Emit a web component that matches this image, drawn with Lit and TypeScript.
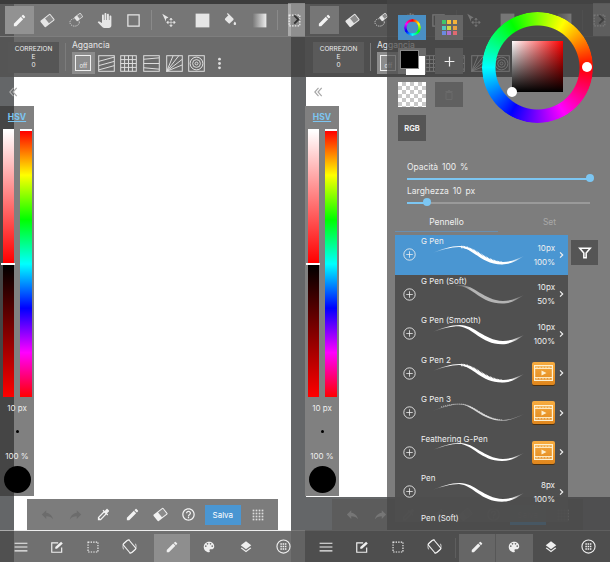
import { LitElement, html, css, svg } from "lit";
import { customElement } from "lit/decorators.js";

const P = {
  pencil: "M3 17.25V21h3.75L17.81 9.94l-3.75-3.75L3 17.25zM20.71 7.04a1 1 0 0 0 0-1.41l-2.34-2.34a1 1 0 0 0-1.41 0l-1.83 1.83 3.75 3.75 1.83-1.83z",
  hand: "M23 5.5V20c0 2.2-1.8 4-4 4h-7.3c-1.08 0-2.1-.43-2.85-1.19L1 14.83s1.26-1.23 1.3-1.25c.22-.19.49-.29.79-.29.22 0 .42.06.6.16.04.01 4.31 2.46 4.31 2.46V4c0-.83.67-1.5 1.5-1.5S11 3.17 11 4v7h1V1.5c0-.83.67-1.5 1.5-1.5S15 .67 15 1.5V11h1V2.5c0-.83.67-1.5 1.5-1.5s1.5.67 1.5 1.5V11h1V5.5c0-.83.67-1.5 1.5-1.5s1.5.67 1.5 1.5z",
  bucket: "M16.56 8.94L7.62 0 6.21 1.41l2.38 2.38-5.15 5.15c-.59.59-.59 1.54 0 2.12l5.5 5.5c.29.29.68.44 1.06.44s.77-.15 1.06-.44l5.5-5.5c.59-.58.59-1.53 0-2.12zM19 13.5s-2 2.17-2 3.5c0 1.1.9 2 2 2s2-.9 2-2c0-1.33-2-3.5-2-3.5z",
  dropper: "M20.71 5.63l-2.34-2.34c-.39-.39-1.02-.39-1.41 0l-3.12 3.12-1.93-1.91-1.41 1.41 1.42 1.42L3 16.25V21h4.75l8.92-8.92 1.42 1.42 1.41-1.41-1.92-1.92 3.12-3.12c.4-.4.4-1.03.01-1.42zM6.92 19L5 17.08l8.06-8.06 1.92 1.92L6.92 19z",
  help: "M11 18h2v-2h-2v2zm1-16C6.48 2 2 6.48 2 12s4.48 10 10 10 10-4.48 10-10S17.52 2 12 2zm0 18c-4.41 0-8-3.59-8-8s3.59-8 8-8 8 3.59 8 8-3.59 8-8 8zm0-14c-2.21 0-4 1.79-4 4h2c0-1.1.9-2 2-2s2 .9 2 2c0 2-3 1.75-3 5h2c0-2.25 3-2.5 3-5 0-2.21-1.79-4-4-4z",
  undo: "M10 9V5l-7 7 7 7v-4.1c5 0 8.5 1.6 11 5.1-1-5-4-10-11-11z",
  redo: "M14 9V5l7 7-7 7v-4.1c-5 0-8.5 1.6-11 5.1 1-5 4-10 11-11z",
  palette: "M12 3c-4.97 0-9 4.03-9 9s4.03 9 9 9c.83 0 1.5-.67 1.5-1.5 0-.39-.15-.74-.39-1.01-.23-.26-.38-.61-.38-.99 0-.83.67-1.5 1.5-1.5H16c2.76 0 5-2.24 5-5 0-4.42-4.03-8-9-8zm-5.5 9c-.83 0-1.5-.67-1.5-1.5S5.67 9 6.5 9 8 9.67 8 10.5 7.33 12 6.5 12zm3-4C8.67 8 8 7.33 8 6.5S8.67 5 9.5 5s1.5.67 1.5 1.5S10.33 8 9.5 8zm5 0c-.83 0-1.5-.67-1.5-1.5S13.67 5 14.5 5s1.5.67 1.5 1.5S15.33 8 14.5 8zm3 4c-.83 0-1.5-.67-1.5-1.5S16.67 9 17.5 9s1.5.67 1.5 1.5-.67 1.5-1.5 1.5z",
  layers: "M11.99 18.54l-7.37-5.73L3 14.07l9 7 9-7-1.63-1.27-7.38 5.74zM12 16l7.36-5.73L21 9l-9-7-9 7 1.63 1.27L12 16z",
};

const f = (d: string) => svg`<path d=${d} fill="currentColor"/>`;
const eraserShape = svg`<g transform="rotate(-38 12 12)"><rect x="2" y="5.5" width="20" height="13" rx="1.5" fill="currentColor"/><rect x="11" y="7" width="9.5" height="10" fill="#8b8b8b"/></g>`;

const icons: Record<string, unknown> = {
  pencil: f(P.pencil),
  eraser: eraserShape,
  lasso: svg`<ellipse cx="9" cy="15" rx="7.5" ry="6" fill="none" stroke="currentColor" stroke-width="1.3" stroke-dasharray="2 1.6"/><g transform="translate(8 -1) scale(.62)">${eraserShape}</g>`,
  hand: f(P.hand),
  square: svg`<rect x="3" y="3" width="18" height="18" fill="none" stroke="currentColor" stroke-width="2"/>`,
  move: svg`<path d="M2 1l10 6-4 2 0 5z" fill="currentColor"/><path d="M16 9v12M10 15h12M16 8l-2 2.5h4zM16 22l-2-2.5h4zM9 15l2.5-2v4zM23 15l-2.5-2v4z" fill="currentColor" stroke="currentColor" stroke-width="1"/>`,
  fill: svg`<rect x="1" y="1" width="22" height="22" fill="currentColor"/>`,
  bucket: f(P.bucket),
  gradient: svg`<defs><linearGradient id="gr"><stop offset="0" stop-color="#777"/><stop offset="1" stop-color="#eee"/></linearGradient></defs><rect x="1" y="1" width="22" height="22" fill="url(#gr)"/>`,
  dotted: svg`<rect x="3.5" y="3.5" width="17" height="17" fill="none" stroke="currentColor" stroke-width="2" stroke-dasharray="2.4 2"/>`,
  undo: f(P.undo),
  redo: f(P.redo),
  dropper: f(P.dropper),
  help: f(P.help),
  menu: svg`<path d="M1 5.5h22M1 12h22M1 18.5h22" stroke="currentColor" stroke-width="2"/>`,
  edit: svg`<path d="M20 13v8H3V5h11" fill="none" stroke="currentColor" stroke-width="2"/><path d="M9 15v-3l10-9 3 3-10 9z" fill="currentColor"/>`,
  rotate: svg`<circle cx="12" cy="12" r="10.5" fill="none" stroke="currentColor" stroke-width="1.3" stroke-dasharray="22 11" stroke-dashoffset="5"/><rect x="6" y="2.5" width="12" height="19" rx="1.5" transform="rotate(-40 12 12)" fill="none" stroke="currentColor" stroke-width="1.8"/>`,
  palette: f(P.palette),
  layers: f(P.layers),
  globe: svg`<circle cx="12" cy="12" r="10.5" fill="none" stroke="currentColor" stroke-width="1.8"/><path d="M7 8h10M7 12h10M7 16h10" stroke="currentColor" stroke-width="2.4" stroke-dasharray="2.4 1.2"/>`,
  filter: svg`<path d="M3 4h18l-7 8v8h-4v-8z" fill="none" stroke="currentColor" stroke-width="2.6"/>`,
  plusc: svg`<circle cx="12" cy="12" r="10.5" fill="none" stroke="currentColor" stroke-width="1.6"/><path d="M12 6v12M6 12h12" stroke="currentColor" stroke-width="1.4"/>`,
  plus: svg`<path d="M12 3v18M3 12h18" stroke="currentColor" stroke-width="2.2"/>`,
  trash: svg`<path d="M6 7h12v14H6zM5 5h14M10 3h4" fill="none" stroke="currentColor" stroke-width="2"/>`,
  chev: svg`<path d="M7 3l9 9-9 9" fill="none" stroke="currentColor" stroke-width="4.2"/>`,
  dchev: svg`<path d="M12 3l-8 9 8 9M19 3l-8 9 8 9" fill="none" stroke="currentColor" stroke-width="2.6"/>`,
  dots: svg`<g fill="currentColor">${[3, 9, 15, 21].map((y) => [3, 9, 15, 21].map((x) => svg`<rect x=${x - 1.7} y=${y - 1.7} width="3.4" height="3.4"/>`))}</g>`,
  vdots: svg`<g fill="currentColor"><circle cx="12" cy="4" r="2.6"/><circle cx="12" cy="12" r="2.6"/><circle cx="12" cy="20" r="2.6"/></g>`,
  s1: svg`<g fill="none" stroke="currentColor" stroke-width="1.4"><rect x="1" y="1" width="22" height="22"/><path d="M1 9l22-6M1 15l22-6M1 21l22-6"/></g>`,
  s2: svg`<g fill="none" stroke="currentColor" stroke-width="1.4"><rect x="1" y="1" width="22" height="22"/><path d="M6.5 1v22M12 1v22M17.5 1v22M1 6.5h22M1 12h22M1 17.5h22"/></g>`,
  s3: svg`<g fill="none" stroke="currentColor" stroke-width="1.4"><rect x="1" y="1" width="22" height="22"/><path d="M1 6l22-2M1 12h22M1 18l22 2"/></g>`,
  s4: svg`<g fill="none" stroke="currentColor" stroke-width="1.4"><rect x="1" y="1" width="22" height="22"/><path d="M1 23L10 1M1 23L18 1M1 23L23 6M1 23L23 14"/></g>`,
  s5: svg`<g fill="none" stroke="currentColor" stroke-width="1.4"><rect x="1" y="1" width="22" height="22"/><circle cx="12" cy="12" r="9"/><circle cx="12" cy="12" r="5.5"/><circle cx="12" cy="12" r="2"/></g>`,
};

const ic = (name: string, cls = "") =>
  html`<svg class="ic ${cls}" viewBox="0 0 24 24">${icons[name]}</svg>`;

const strokePath = (t: number) =>
  `M3 13C14 8 24 5 33 5C48 5 56 20 76 21C84 21 90 18 97 15C90 ${18 + t * 0.6} 84 ${21 + t} 75 ${21 + t}C54 ${21 + t} 46 ${5 + t * 0.8} 32 ${5 + t * 0.4}C24 ${5 + t * 0.4} 14 9 3 13Z`;

interface Brush {
  name: string;
  t: number;
  size?: string;
  op?: string;
  video?: boolean;
  kind?: string;
  active?: boolean;
  cut?: boolean;
}

const brushes: Brush[] = [
  { name: "G Pen", t: 2.4, size: "10px", op: "100%", kind: "rough", active: true },
  { name: "G Pen (Soft)", t: 2.6, size: "10px", op: "50%", kind: "soft" },
  { name: "G Pen (Smooth)", t: 3.2, size: "10px", op: "100%" },
  { name: "G Pen 2", t: 2.6, video: true, kind: "rough" },
  { name: "G Pen 3", t: 0.6, video: true, kind: "thin" },
  { name: "Feathering G-Pen", t: 2, video: true },
  { name: "Pen", t: 2.8, size: "8px", op: "100%" },
  { name: "Pen (Soft)", t: 2.8, cut: true },
];

@customElement("app-root")
export class AppRoot extends LitElement {
  static styles = css`
    :host { display: block; width: 610px; height: 562px; overflow: hidden; font-family: "Inter", "Open Sans", sans-serif; color: #eee; }
    * { box-sizing: border-box; }
    .stage { display: flex; width: 610px; height: 562px; }
    .phone { position: relative; width: 305px; height: 562px; flex: none; display: flex; flex-direction: column; background: #646668; overflow: hidden; }
    .paper { position: absolute; background: #fff; }
    .one .paper { left: 14px; right: 14px; top: 0; bottom: 31px; }
    .two .paper { left: 1px; right: 0; top: 0; bottom: 65px; }
    .ic { display: block; width: 100%; height: 100%; fill: none; color: inherit; }

    .strip, .tools, .opts, .nav, .hsv, .float { position: relative; flex: none; }
    .strip { height: 4px; }
    .one .strip { background: #3c3c3c; }
    .two .strip { background: #3e3e3e; }
    .tools { height: 33px; display: flex; align-items: center; padding-left: 5px; color: #e6e6e6; border-bottom: 1px solid #7e7e7e; }
    .one .tools { background: linear-gradient(90deg, #585858 14px, #767676 14px, #767676 291px, #4a4a4a 291px); }
    .two .tools { background: #565656; border-bottom-color: #626262; }
    .cell { width: 28.5px; height: 28px; display: flex; align-items: center; justify-content: center; flex: none; }
    .cell > svg { width: 15px; height: 15px; }
    .cell.on { background: #929292; color: #f4f4f4; }
    .two .cell.on { background: #767676; }
    .sep { width: 1px; height: 20px; background: #8a8a8a; margin: 0 3px; flex: none; }
    .two .sep { background: #666; }
    .gap { width: 5px; flex: none; }
    .more { position: absolute; left: 288px; right: 0; top: -1px; height: 33px; background: rgba(255,255,255,.38); display: flex; align-items: center; justify-content: center; color: #333; }
    .more svg { width: 11px; height: 11px; }

    .opts { height: 40px; display: flex; align-items: center; padding-left: 8px; }
    .one .opts { background: linear-gradient(90deg, #555 14px, #6b6b6b 14px, #6b6b6b 291px, #484848 291px); }
    .two .opts { background: #4e4e4e; }
    .correz { width: 51px; height: 31px; background: #565656; font-size: 6.5px; line-height: 8px; text-align: center; color: #eee; display: flex; flex-direction: column; justify-content: center; }
    .two .correz { background: #5a5a5a; }
    .opts .sep { height: 28px; margin: 0 6px 0 6px; background: #7c7c7c; }
    .snap { display: flex; flex-direction: column; }
    .snap-t { font-size: 8.5px; line-height: 11px; color: #e6e6e6; }
    .snap-r { display: flex; align-items: center; margin-top: 1px; }
    .s { width: 22.7px; height: 22px; display: flex; align-items: center; justify-content: center; color: #dedede; }
    .s svg { width: 17px; height: 17px; }
    .s.off { background: #8c8c8c; position: relative; }
    .off-b { width: 16px; height: 16px; border: 1px solid #eee; font-size: 6px; display: flex; align-items: flex-end; justify-content: center; line-height: 8px; color: #eee; }
    .s.v svg { width: 13px; height: 13px; }

    .chev-row { position: relative; height: 29px; display: flex; align-items: center; padding-left: 8px; color: #a8a8a8; flex: none; }
    .chev-row svg { width: 11px; height: 12px; }

    .hsv { width: 34px; height: 390px; display: flex; flex-direction: column; align-items: center; }
    .one .hsv { background: linear-gradient(90deg, #454545 14px, #808080 14px); }
    .two .hsv { background: #808080; margin-left: 0; }
    .hsv-t { height: 23px; padding-top: 5px; font-size: 8.5px; line-height: 12px; font-weight: 700; color: #7cc6f2; text-decoration: underline; }
    .bars { display: flex; gap: 6px; width: 34px; padding-left: 3px; height: 268px; flex: none; }
    .bar { width: 11px; height: 268px; border-top: 2px solid #fff; position: relative; }
    .hue { width: 12px; background: linear-gradient(#f00, #ff0 16.6%, #0f0 33.3%, #0ff 50%, #00f 66.6%, #f0f 83.3%, #f00); }
    .sat { background: linear-gradient(#fff, #f00 49.5%, #000 50.5%, #f00); }
    .sat::after { content: ""; position: absolute; left: -2px; right: -1px; top: 132px; height: 2px; background: #fff; }
    .px { font-size: 8px; color: #eee; margin-top: 5px; line-height: 12px; flex: none; }
    .px.low { margin-top: 0; }
    .pt { width: 3px; height: 3px; border-radius: 50%; background: #000; margin: 15.5px 0 17.5px; flex: none; }
    .blk { width: 27px; height: 27px; border-radius: 50%; background: #000; margin-top: 4px; flex: none; }

    .float { margin: 3px 0 0 27px; width: 251px; height: 31px; display: flex; align-items: center; padding-left: 6px; }
    .one .float { background: #7c7c7c; }
    .two .float { background: #5c5c5c; }
    .fi { width: 28.3px; height: 16px; display: flex; justify-content: center; color: #f2f2f2; flex: none; }
    .fi svg { width: 15px; height: 15px; }
    .fi.dim { color: #6c6c6c; }
    .two .fi.dim { color: #767676; }
    .salva { margin-left: 2px; width: 36px; height: 20px; background: #4a96d2; font-size: 8px; display: flex; align-items: center; justify-content: center; color: #fff; flex: none; }
    .two .salva { background: #4a7fa8; }
    .grid { width: 12px; height: 12px; margin-left: 11px; color: #ddd; flex: none; }
    .line { position: relative; height: 1px; flex: none; }
    .one .line { background: linear-gradient(90deg, #aaa 14px, #eee 14px, #eee 291px, #777 291px); }
    .two .line { background: #5f5f5f; }

    .nav { height: 31px; display: flex; align-items: center; padding-left: 3px; color: #efefef; }
    .one .nav { background: linear-gradient(90deg, #505050 14px, #707070 14px, #707070 291px, #636363 291px); }
    .two .nav { background: #4e4e4e; }
    .n { width: 36px; height: 28px; margin-top: 3px; display: flex; align-items: center; justify-content: center; flex: none; padding-bottom: 3px; }
    .n svg { width: 14px; height: 14px; }
    .n.lg svg { width: 15px; height: 15px; }
    .n.w { width: 37.5px; }
    .n.on { background: #8e8e8e; }
    .two .n.on { background: #666; }
    .two .n.w.on { border-left: 1px solid #575757; }
    .ngap { width: 7px; flex: none; display: flex; justify-content: center; }
    .two .ngap::after { content: ""; width: 1px; height: 20px; background: #5e5e5e; margin-top: 3px; }

    .panel { position: absolute; left: 82px; top: 0; right: 0; height: 530px; background: rgba(70,70,70,.7); display: flex; flex-direction: column; }
    .top { display: flex; height: 162px; flex: none; }
    .sw { margin: 15px 0 0 11px; display: grid; grid-template-columns: 28px 28px; grid-template-rows: 25px 26px 25px 26px; column-gap: 9px; row-gap: 8px; align-self: start; }
    .b { display: flex; align-items: center; justify-content: center; background: #666; }
    .b.wheelb { background: #4a8fc4; }
    .mini { width: 17px; height: 17px; border-radius: 50%; background: conic-gradient(#f00, #ff0, #0f0, #0ff, #00f, #f0f, #f00); -webkit-mask: radial-gradient(circle, transparent 5.6px, #000 6.2px); mask: radial-gradient(circle, transparent 5.6px, #000 6.2px); }
    .pal { display: grid; grid-template-columns: repeat(3, 4px); grid-auto-rows: 4px; gap: 1.5px; }
    .pal i { display: block; }
    .fg { position: relative; background: #6a6a6a; }
    .fg-w { position: absolute; left: 8px; top: 8px; width: 19px; height: 19px; background: #fff; }
    .fg-k { position: absolute; left: 2px; top: 2px; width: 19px; height: 19px; background: #000; border: 1px solid #888; }
    .b.plus { color: #eee; background: #5a5a5a; }
    .b.plus svg { width: 13px; height: 13px; }
    .b.trash { color: #6a6a6a; background: #606060; }
    .b.trash svg { width: 12px; height: 12px; }
    .check { background: #fff conic-gradient(#c8c8c8 25%, #fff 0 50%, #c8c8c8 0 75%, #fff 0) 0 0 / 8px 8px; }
    .b.rgb { background: #555; font-size: 7.5px; font-weight: 700; color: #f0f0f0; }
    .wheel { position: relative; width: 111px; height: 111px; margin: 12px 0 0 19px; flex: none; }
    .ring { position: absolute; inset: 0; border-radius: 50%; background: conic-gradient(from 90deg, #f00, #f0f, #00f, #0ff, #0f0, #ff0, #f00); -webkit-mask: radial-gradient(circle, transparent 41.5px, #000 42.5px); mask: radial-gradient(circle, transparent 41.5px, #000 42.5px); }
    .sv { position: absolute; left: 30px; top: 29px; width: 51px; height: 51px; background: linear-gradient(transparent, #000), linear-gradient(90deg, #fff, #f00); }
    .th { position: absolute; width: 10px; height: 10px; border-radius: 50%; background: #fff; }
    .th.a { left: 100px; top: 50px; }
    .th.b2 { left: 25px; top: 75px; }

    .sl { margin-left: 20px; width: 183px; flex: none; margin-bottom: 2px; }
    .sl-t { font-size: 8.5px; line-height: 11px; color: #eee; word-spacing: 1.5px; }
    .track { height: 11px; position: relative; display: flex; align-items: center; }
    .rail { height: 2px; width: 100%; background: #9a9a9a; }
    .rail i { display: block; height: 100%; background: #7cc6f2; }
    .knob { position: absolute; top: 1px; width: 8px; height: 8px; border-radius: 50%; background: #7cc6f2; margin-left: -4px; }

    .tabs { display: flex; margin: 6px 0 0 8px; flex: none; height: 19px; }
    .tab { width: 103px; text-align: center; font-size: 8.5px; line-height: 12px; color: #f0f0f0; }
    .tab.act { border-bottom: 1px solid #6a8fb0; height: 16px; }
    .tab.sec { color: #a8a8a8; }
    .lower { display: flex; margin: 0 0 0 8px; flex: none; }
    .list { width: 173px; height: 287px; overflow: hidden; background: rgba(78,78,78,.97); flex: none; }
    .row { height: 39.5px; display: grid; grid-template-columns: 26px 1fr auto 13px; align-items: center; color: #f0f0f0; position: relative; }
    .row.active { background: #4a96d2; }
    .plusc { width: 13px; height: 13px; margin-left: 7.5px; }
    .mid { position: relative; align-self: stretch; display: grid; }
    .name { grid-area: 1 / 1; font-size: 8px; line-height: 10px; margin-top: 1px; position: relative; z-index: 1; white-space: nowrap; }
    .st { grid-area: 1 / 1; width: 100px; height: 28px; align-self: center; margin-left: 6px; color: #fff; overflow: visible; }
    .vals { font-size: 8px; line-height: 14px; text-align: right; width: 24px; white-space: nowrap; position: relative; }
    .chv { width: 7px; height: 10px; margin-left: 3px; }
    .video { width: 23px; height: 23px; border-radius: 2px; background: linear-gradient(#f7ac40, #e0861c); box-shadow: 0 1px 0 #4a3010; display: flex; align-items: center; justify-content: center; }
    .video svg { width: 19px; height: 16px; }
    .filter { width: 27px; height: 25px; margin: 5px 0 0 3px; background: #555; color: #fff; display: flex; align-items: center; justify-content: center; }
    .filter svg { width: 14px; height: 14px; }
  `;

  private phone(which: string) {
    const two = which === "two";
    return html`<div class="phone ${which}">
      <div class="paper"></div>
      <div class="strip"></div>
      <div class="tools">
        <div class="cell on">${ic("pencil")}</div>
        <div class="cell">${ic("eraser")}</div>
        <div class="cell">${ic("lasso")}</div>
        <div class="cell">${ic("hand")}</div>
        <div class="cell">${ic("square")}</div>
        <div class="sep"></div>
        <div class="cell">${ic("move")}</div>
        <div class="gap"></div>
        <div class="cell">${ic("fill")}</div>
        <div class="cell">${ic("bucket")}</div>
        <div class="cell">${ic("gradient")}</div>
        <div class="sep"></div>
        <div class="cell">${ic("dotted")}</div>
        <div class="more">${ic("chev")}</div>
      </div>
      <div class="opts">
        <div class="correz"><div>CORREZION</div><div>E</div><div>0</div></div>
        <div class="sep"></div>
        <div class="snap">
          <div class="snap-t">Aggancia</div>
          <div class="snap-r">
            <div class="s off"><div class="off-b">off</div></div>
            ${["s1", "s2", "s3", "s4", "s5"].map((n) => html`<div class="s">${ic(n)}</div>`)}
            <div class="s v">${ic("vdots")}</div>
          </div>
        </div>
      </div>
      <div class="chev-row">${ic("dchev")}</div>
      <div class="hsv">
        <div class="hsv-t">HSV</div>
        <div class="bars"><div class="bar sat"></div><div class="bar hue"></div></div>
        <div class="px">10 px</div>
        <div class="pt"></div>
        <div class="px low">100 %</div>
        <div class="blk"></div>
      </div>
      <div class="float">
        <div class="fi dim">${ic("undo")}</div>
        <div class="fi dim">${ic("redo")}</div>
        <div class="fi">${ic("dropper")}</div>
        <div class="fi">${ic("pencil")}</div>
        <div class="fi">${ic("eraser")}</div>
        <div class="fi">${ic("help")}</div>
        <div class="salva">Salva</div>
        <div class="grid">${ic("dots")}</div>
      </div>
      <div class="line"></div>
      <div class="nav">
        <div class="n">${ic("menu")}</div>
        <div class="n">${ic("edit")}</div>
        <div class="n">${ic("dotted")}</div>
        <div class="n lg">${ic("rotate")}</div>
        <div class="ngap"></div>
        <div class="n on">${ic("pencil")}</div>
        <div class="n w ${two ? "on" : ""}">${ic("palette")}</div>
        <div class="n w">${ic("layers")}</div>
        <div class="n w lg">${ic("globe")}</div>
      </div>
      ${two ? this.panel() : ""}
    </div>`;
  }

  private stroke(b: Brush, i: number) {
    const d = strokePath(b.t);
    const id = `fade${i}`;
    const start = b.kind === "soft" ? 0.28 : 0.06;
    const color = b.kind === "soft" ? "#b4b4b4" : b.kind === "thin" ? "#d8d8d8" : "#fff";
    const defs = html`<svg class="st" viewBox="0 0 100 28">
      <defs>
        <linearGradient id=${id} gradientUnits="userSpaceOnUse" x1="0" x2="100" y1="0" y2="0">
          <stop offset=${start} stop-color=${color} stop-opacity="0"/>
          <stop offset=${start + 0.16} stop-color=${color}/>
          <stop offset=".84" stop-color=${color}/>
          <stop offset=".97" stop-color=${color} stop-opacity=".1"/>
        </linearGradient>
      </defs>
      <path d=${d} fill="url(#${id})"/>
      ${b.kind === "rough"
        ? svg`<path d="M34 6C48 6 56 20 76 22" fill="none" stroke="#fff" stroke-width="2.6" stroke-dasharray=".8 .7"/>`
        : b.kind === "thin"
          ? svg`<path d="M14 8C20 6 26 5 33 5C48 5 56 20 76 21" fill="none" stroke="#d8d8d8" stroke-width=".8" stroke-dasharray="1 1"/>`
          : ""}
    </svg>`;
    return defs;
  }

  private panel() {
    const pal = ["#3fc56b", "#f4c53a", "#f5b23a", "#4fc9c0", "#c8d84a", "#e8a040", "#6a8ae0", "#b070d0", "#e06a70"];
    return html`<div class="panel">
      <div class="top">
        <div class="sw">
          <div class="b wheelb"><div class="mini"></div></div>
          <div class="b"><div class="pal">${pal.map((c) => html`<i style="background:${c}"></i>`)}</div></div>
          <div class="fg"><div class="fg-w"></div><div class="fg-k"></div></div>
          <div class="b plus">${ic("plus")}</div>
          <div class="check"></div>
          <div class="b trash">${ic("trash")}</div>
          <div class="b rgb">RGB</div>
        </div>
        <div class="wheel">
          <div class="ring"></div>
          <div class="sv"></div>
          <div class="th a"></div>
          <div class="th b2"></div>
        </div>
      </div>
      ${this.slider("Opacità 100 %", 100)}
      ${this.slider("Larghezza 10 px", 11)}
      <div class="tabs">
        <div class="tab act">Pennello</div>
        <div class="tab sec">Set</div>
      </div>
      <div class="lower">
        <div class="list">
          ${brushes.map(
            (b, i) => html`<div class="row ${b.active ? "active" : ""}">
              <div class="plusc">${ic("plusc")}</div>
              <div class="mid"><div class="name">${b.name}</div>${this.stroke(b, i)}</div>
              ${b.cut
                ? html`<div class="vals"></div>`
                : b.video
                  ? html`<div class="video"><svg viewBox="0 0 19 16"><rect x=".6" y=".6" width="17.8" height="14.8" fill="none" stroke="#fdf0d0" stroke-width="1.2"/><path d="M0 3.4h19M0 12.6h19" stroke="#fdf0d0" stroke-width="1"/><path d="M3 1.8v1M6 1.8v1M9 1.8v1M12 1.8v1M15 1.8v1M3 13.2v1M6 13.2v1M9 13.2v1M12 13.2v1M15 13.2v1" stroke="#fdf0d0" stroke-width="1.2"/><path d="M7.5 5.5l5 2.5-5 2.5z" fill="#fdf0d0"/></svg></div>`
                  : html`<div class="vals"><div>${b.size}</div><div>${b.op}</div></div>`}
              ${b.cut ? html`<div></div>` : html`<svg class="ic chv" viewBox="0 0 24 24">${icons.chev}</svg>`}
            </div>`
          )}
        </div>
        <div class="filter">${ic("filter")}</div>
      </div>
    </div>`;
  }

  private slider(label: string, pct: number) {
    return html`<div class="sl">
      <div class="sl-t">${label}</div>
      <div class="track">
        <div class="rail"><i style="width:${pct}%"></i></div>
        <div class="knob" style="left:${pct}%"></div>
      </div>
    </div>`;
  }

  render() {
    return html`<div class="stage">${this.phone("one")}${this.phone("two")}</div>`;
  }
}
